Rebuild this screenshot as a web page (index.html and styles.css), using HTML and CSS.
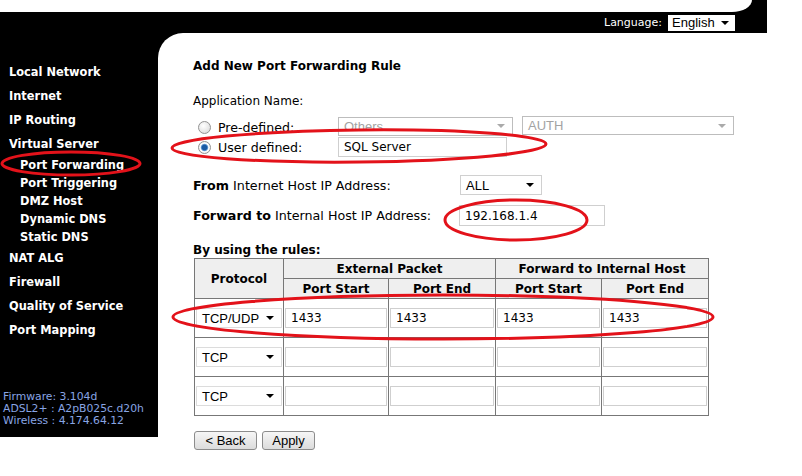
FILE: index.html
```html
<!DOCTYPE html>
<html lang="en">
<head>
    <meta charset="UTF-8">
    <title>Port Forwarding</title>
    <link rel="stylesheet" href="styles.css">
</head>
<body>
    <div class="frame">
        <div class="top"><div class="top-cap"></div></div>
        <div class="langbar">
            <span>Language:</span>
            <span class="sel lang-sel">English</span>
        </div>

        <div class="main">
            <!-- Меню слева -->
            <div class="sidebar">
                <div class="item">Local Network</div>
                <div class="item">Internet</div>
                <div class="item">IP Routing</div>
                <div class="item">Virtual Server</div>
                <div class="sub">
                    <div class="sub-item">Port Forwarding</div>
                    <div class="sub-item">Port Triggering</div>
                    <div class="sub-item">DMZ Host</div>
                    <div class="sub-item">Dynamic DNS</div>
                    <div class="sub-item">Static DNS</div>
                </div>
                <div class="item">NAT ALG</div>
                <div class="item">Firewall</div>
                <div class="item">Quality of Service</div>
                <div class="item">Port Mapping</div>

                <div class="firmware">
                    <div>Firmware: 3.104d</div>
                    <div>ADSL2+ : A2pB025c.d20h</div>
                    <div>Wireless : 4.174.64.12</div>
                </div>
            </div>

            <!-- Форма -->
            <div class="content">
                <div class="title">Add New Port Forwarding Rule</div>
                <div class="app-name">Application Name:</div>

                <div class="row">
                    <input type="radio" class="radio" name="app">
                    <span class="radio-label">Pre-defined:</span>
                    <span class="sel disabled sel-others">Others</span>
                    <span class="sel disabled sel-auth">AUTH</span>
                </div>
                <div class="row">
                    <input type="radio" class="radio" name="app" checked>
                    <span class="radio-label">User defined:</span>
                    <input type="text" class="text in-app" value="SQL Server">
                </div>

                <div class="row row-from">
                    <span class="host-label"><b>From</b> Internet Host IP Address:</span>
                    <span class="sel sel-all">ALL</span>
                </div>
                <div class="row row-to">
                    <span class="host-label"><b>Forward to</b> Internal Host IP Address:</span>
                    <input type="text" class="text in-ip" value="192.168.1.4">
                </div>

                <div class="rules-title">By using the rules:</div>
                <table class="rules">
                    <colgroup>
                        <col class="c1"><col class="c2"><col class="c3"><col class="c4"><col class="c5">
                    </colgroup>
                    <tr>
                        <th rowspan="2">Protocol</th>
                        <th colspan="2">External Packet</th>
                        <th colspan="2">Forward to Internal Host</th>
                    </tr>
                    <tr>
                        <th>Port Start</th>
                        <th>Port End</th>
                        <th>Port Start</th>
                        <th>Port End</th>
                    </tr>
                    <tr>
                        <td><span class="sel tsel">TCP/UDP</span></td>
                        <td><input type="text" class="text tin" value="1433"></td>
                        <td><input type="text" class="text tin" value="1433"></td>
                        <td><input type="text" class="text tin" value="1433"></td>
                        <td><input type="text" class="text tin" value="1433"></td>
                    </tr>
                    <tr>
                        <td><span class="sel tsel">TCP</span></td>
                        <td><input type="text" class="text tin"></td>
                        <td><input type="text" class="text tin"></td>
                        <td><input type="text" class="text tin"></td>
                        <td><input type="text" class="text tin"></td>
                    </tr>
                    <tr>
                        <td><span class="sel tsel">TCP</span></td>
                        <td><input type="text" class="text tin"></td>
                        <td><input type="text" class="text tin"></td>
                        <td><input type="text" class="text tin"></td>
                        <td><input type="text" class="text tin"></td>
                    </tr>
                </table>

                <div class="buttons">
                    <button class="btn btn-back">&lt; Back</button>
                    <button class="btn btn-apply">Apply</button>
                </div>
            </div>
        </div>
    </div>

    <!-- Красные пометки поверх скриншота -->
    <svg class="marks" width="802" height="476" viewBox="0 0 802 476">
        <ellipse cx="71" cy="163.5" rx="69" ry="11.5"/>
        <ellipse cx="359" cy="146" rx="187" ry="16" transform="rotate(-0.6 359 146)"/>
        <ellipse cx="516" cy="220" rx="71" ry="20"/>
        <ellipse cx="443" cy="317" rx="270" ry="22"/>
    </svg>
</body>
</html>
```

FILE: styles.css
```css
body {
    margin: 0;
    padding: 0;
    font-family: "DejaVu Sans", Verdana, sans-serif;
    font-size: 12px;
    color: #000;
    background: #fff;
    position: relative;
    height: 476px;
    overflow: hidden;
}

.frame {
    width: 767px;
}

/* Шапка */
.top {
    height: 12px;
    background: #000;
}

.top-cap {
    width: 752px;
    height: 12px;
    background: #fff;
    border-bottom-right-radius: 20px 12px;
}

.langbar {
    height: 21px;
    background: #000;
    color: #fff;
    font-size: 11px;
    display: flex;
    justify-content: flex-end;
    align-items: center;
    gap: 6px;
    padding-right: 32px;
}

.main {
    display: flex;
    background: linear-gradient(#000, #000) 0 0 / 100% 30px no-repeat;
}

/* Меню */
.sidebar {
    width: 158px;
    height: 404px;
    box-sizing: border-box;
    padding-top: 27px;
    background: #000;
    color: #fff;
    font-weight: bold;
    font-size: 11.4px;
    display: flex;
    flex-direction: column;
}

.item {
    height: 24px;
    line-height: 24px;
    padding-left: 9px;
}

.sub-item {
    height: 18px;
    line-height: 18px;
    padding-left: 20px;
}

.firmware {
    margin-top: auto;
    padding: 0 0 10px 3px;
    font-weight: normal;
    font-size: 10.8px;
    line-height: 12px;
    color: #88a5e4;
}

/* Форма */
.content {
    flex: 1;
    height: 443px;
    box-sizing: border-box;
    background: #fff;
    border-top-left-radius: 25px;
    padding: 25px 0 0 35px;
}

.title {
    font-weight: bold;
    line-height: 16px;
}

.app-name {
    margin-top: 19px;
    line-height: 16px;
    margin-bottom: 8px;
}

.row {
    display: flex;
    align-items: center;
    height: 20px;
}

.row-from {
    margin-top: 18px;
}

.row-to {
    margin-top: 10px;
    height: 21px;
}

.radio {
    appearance: none;
    -webkit-appearance: none;
    width: 13px;
    height: 13px;
    margin: 0 7px 0 5px;
    border: 1px solid #929292;
    border-radius: 50%;
    box-sizing: border-box;
    background: radial-gradient(circle at 40% 35%, #fff, #d6d6d6);
}

.radio:checked {
    background: radial-gradient(circle, #1b5aa3 0 2.4px, #5d95d2 3.2px, #fff 4.2px, #d8d8d8 100%);
}

.radio-label {
    width: 120px;
    font-size: 12.6px;
}

.host-label {
    width: 267px;
    font-size: 12.7px;
}

/* Выпадающие списки */
.sel {
    display: inline-flex;
    align-items: center;
    justify-content: space-between;
    box-sizing: border-box;
    height: 20px;
    padding: 0 7px 0 5px;
    border: 1px solid #a9a9a9;
    background: #fff;
    color: #000;
    font-family: "Liberation Sans", Arial, sans-serif;
    font-size: 13px;
}

.sel::after {
    content: "";
    border-left: 4px solid transparent;
    border-right: 4px solid transparent;
    border-top: 4px solid #000;
}

.sel.disabled {
    color: #a3a3a3;
    border-color: #bdbdbd;
}

.sel.disabled::after {
    border-top-color: #aaa;
}

.lang-sel {
    width: 67px;
    height: 16px;
    border: none;
    padding: 0 6px 0 4px;
}

.sel-others {
    width: 175px;
    height: 19px;
    margin-top: -2px;
}

.sel-auth {
    width: 212px;
    height: 19px;
    margin-left: 9px;
    margin-top: -3px;
}

.sel-all {
    width: 82px;
    border-color: #d0d0d0;
}

.tsel {
    width: 100%;
    border-color: #dcdcdc;
}

/* Поля ввода */
.text {
    box-sizing: border-box;
    height: 20px;
    margin: 0;
    padding: 0 5px;
    border: 1px solid #cfcfcf;
    font-family: "DejaVu Sans", Verdana, sans-serif;
    font-size: 12px;
    color: #000;
    background: #fff;
}

.in-app {
    width: 169px;
}

.in-ip {
    width: 146px;
    height: 21px;
    margin-left: -1px;
}

.tin {
    width: 100%;
}

/* Таблица правил */
.rules-title {
    margin-top: 16px;
    font-weight: bold;
    line-height: 16px;
}

.rules {
    width: 514px;
    margin-left: 1px;
    border-collapse: collapse;
    table-layout: fixed;
    border: 1px solid #555;
}

.c1 { width: 89px; }
.c2 { width: 105px; }
.c3 { width: 107px; }
.c4 { width: 106px; }
.c5 { width: 107px; }

.rules th {
    height: 19px;
    padding: 0;
    background: #efefef;
    border: 1px solid #777;
    font-size: 12px;
}

.rules td {
    height: 38px;
    padding: 0 1px;
    border: 1px solid #777;
}

/* Кнопки */
.buttons {
    display: flex;
    gap: 5px;
    margin-top: 15px;
    margin-left: 1px;
}

.btn {
    height: 19px;
    padding: 0;
    border: 1px solid #8c8c8c;
    border-radius: 3px;
    background: linear-gradient(#f6f6f6, #dcdcdc);
    font-family: "Liberation Sans", Arial, sans-serif;
    font-size: 13px;
    color: #000;
}

.btn-back {
    width: 63px;
}

.btn-apply {
    width: 53px;
}

/* Красные пометки */
.marks {
    position: absolute;
    top: 0;
    left: 0;
    pointer-events: none;
}

.marks ellipse {
    fill: none;
    stroke: #e3121a;
    stroke-width: 3;
}
```
